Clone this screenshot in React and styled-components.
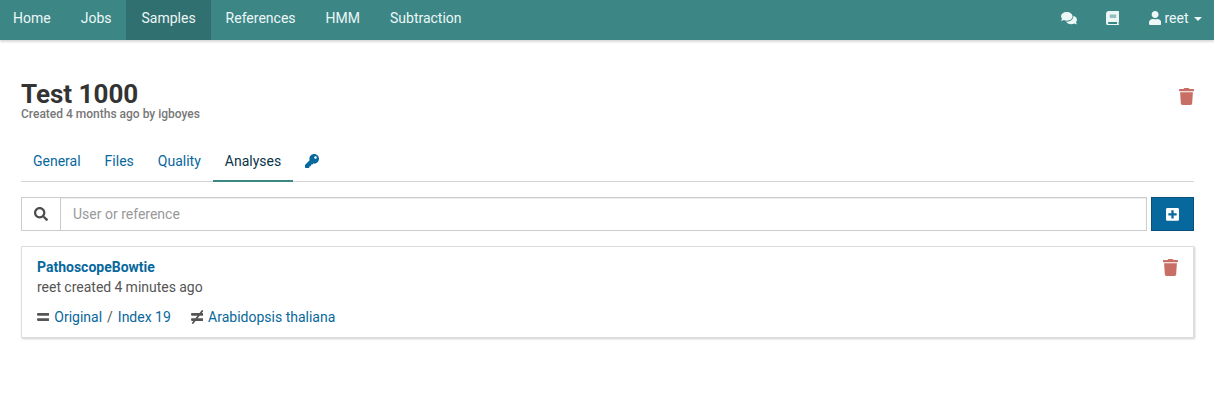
import React from "react";
import styled, { createGlobalStyle } from "styled-components";
import { FaComments, FaBook, FaUser, FaTrash, FaKey, FaSearch, FaPlusSquare, FaEquals, FaNotEqual } from "react-icons/fa";

const GlobalStyle = createGlobalStyle`
  * { box-sizing: border-box; }
  body {
    margin: 0;
    background: #fff;
    color: #333;
    font: 14px/20px Roboto, sans-serif;
  }
`;

const Icon = styled.span`
  display: block;
  flex: none;
  svg {
    display: block;
    width: ${(p) => p.$width ?? "14px"};
    height: ${(p) => p.$height ?? "14px"};
  }
`;

const Navbar = styled.nav`
  display: flex;
  justify-content: space-between;
  height: 40px;
  background: #3c8786;
  color: #edf7f6;
  box-shadow: 0 2px 2px rgba(0, 0, 0, 0.15);
`;

const NavGroup = styled.div`
  display: flex;
`;

const NavItem = styled.a`
  display: flex;
  align-items: center;
  height: 40px;
  padding: 0 ${(p) => p.$right ?? "15px"} 4px ${(p) => p.$left ?? "15px"};
  background: ${(p) => (p.$active ? "#317070" : "transparent")};
`;

const Caret = styled.span`
  margin: 2px 0 0 5.5px;
  border-top: 4px solid;
  border-left: 4px solid transparent;
  border-right: 4px solid transparent;
`;

const UserName = styled.span`
  margin-left: 3px;
`;

const Page = styled.main`
  padding: 40px 20px 40px 21px;
`;

const Header = styled.header`
  display: flex;
  justify-content: space-between;
  height: 60px;
`;

const Title = styled.h1`
  margin: 0;
  font-size: 26px;
  line-height: 28px;
  font-weight: 700;
`;

const Subtitle = styled.div`
  color: #777;
  font-size: 12px;
  line-height: 12px;
  font-weight: 500;
`;

const DeleteButton = styled.span`
  color: #c86e65;
  height: 18px;
  margin-top: ${(p) => p.$top};
`;

const Tabs = styled.div`
  display: flex;
  height: 42px;
  border-bottom: 1px solid #d5d5d5;
`;

const Tab = styled.a`
  display: flex;
  align-items: center;
  height: 42px;
  padding: 2px 12px 0;
  color: ${(p) => (p.$active ? "#0b3447" : "#07689d")};
  border-bottom: 2px solid ${(p) => (p.$active ? "#3c8786" : "transparent")};
`;

const Toolbar = styled.div`
  display: flex;
  height: 34px;
  margin: 15px 0;
`;

const SearchIcon = styled.span`
  display: flex;
  align-items: center;
  justify-content: center;
  width: 39px;
  border: 1px solid #ccc;
  border-right: 0;
  color: #4c4c4c;
`;

const SearchInput = styled.input`
  flex: 1;
  padding: 6px 12px;
  border: 1px solid #ccc;
  box-shadow: inset 0 1px 1px rgba(0, 0, 0, 0.075);
  border-radius: 0;
  font: inherit;
  outline: 0;
  &::placeholder { color: #999; opacity: 1; }
`;

const CreateButton = styled.button`
  display: flex;
  align-items: center;
  justify-content: center;
  width: 43px;
  margin-left: 4px;
  padding: 0;
  border: 1px solid #07527c;
  background: #07689d;
  color: #fff;
`;

const Card = styled.article`
  display: flex;
  justify-content: space-between;
  height: 92px;
  padding: 10px 15px;
  border: 1px solid #ddd;
  box-shadow: 1px 1px 2px 0 rgba(0, 0, 0, 0.2);
`;

const Workflow = styled.div`
  color: #07689d;
  font-weight: 700;
`;

const Meta = styled.div`
  color: #555;
  word-spacing: -0.2px;
`;

const References = styled.div`
  display: flex;
  align-items: center;
  margin-top: 10px;
  color: #555;
`;

const Link = styled.a`
  margin-left: 5px;
  color: #07689d;
`;

const Slash = styled.span`
  margin-left: 5px;
`;

const Subtraction = styled.span`
  display: flex;
  align-items: center;
  margin-left: 20px;
`;

function Remove({ top }) {
  return (
    <DeleteButton $top={top}>
      <Icon $width="15px" $height="17px"><FaTrash /></Icon>
    </DeleteButton>
  );
}

export default function App() {
  return (
    <>
      <GlobalStyle />
      <Navbar>
        <NavGroup>
          <NavItem $left="13px">Home</NavItem>
          <NavItem>Jobs</NavItem>
          <NavItem $active>Samples</NavItem>
          <NavItem>References</NavItem>
          <NavItem>HMM</NavItem>
          <NavItem>Subtraction</NavItem>
        </NavGroup>
        <NavGroup>
          <NavItem $right="14px"><Icon $width="16px" $height="14.2px"><FaComments /></Icon></NavItem>
          <NavItem><Icon $width="13px" $height="14.8px"><FaBook /></Icon></NavItem>
          <NavItem $right="12px">
            <Icon $width="12.25px"><FaUser /></Icon>
            <UserName>reet</UserName>
            <Caret />
          </NavItem>
        </NavGroup>
      </Navbar>
      <Page>
        <Header>
          <div>
            <Title>Test 1000</Title>
            <Subtitle>Created 4 months ago by igboyes</Subtitle>
          </div>
          <Remove top="8px" />
        </Header>
        <Tabs>
          <Tab>General</Tab>
          <Tab>Files</Tab>
          <Tab>Quality</Tab>
          <Tab $active>Analyses</Tab>
          <Tab><Icon><FaKey /></Icon></Tab>
        </Tabs>
        <Toolbar>
          <SearchIcon><Icon><FaSearch /></Icon></SearchIcon>
          <SearchInput placeholder="User or reference" />
          <CreateButton><Icon $width="13px" $height="14.8px"><FaPlusSquare /></Icon></CreateButton>
        </Toolbar>
        <Card>
          <div>
            <Workflow>PathoscopeBowtie</Workflow>
            <Meta>reet created 4 minutes ago</Meta>
            <References>
              <Icon $width="12.25px"><FaEquals /></Icon>
              <Link>Original</Link>
              <Slash>/</Slash>
              <Link>Index 19</Link>
              <Subtraction>
                <Icon $width="12.25px"><FaNotEqual /></Icon>
                <Link>Arabidopsis thaliana</Link>
              </Subtraction>
            </References>
          </div>
          <Remove top="2px" />
        </Card>
      </Page>
    </>
  );
}
